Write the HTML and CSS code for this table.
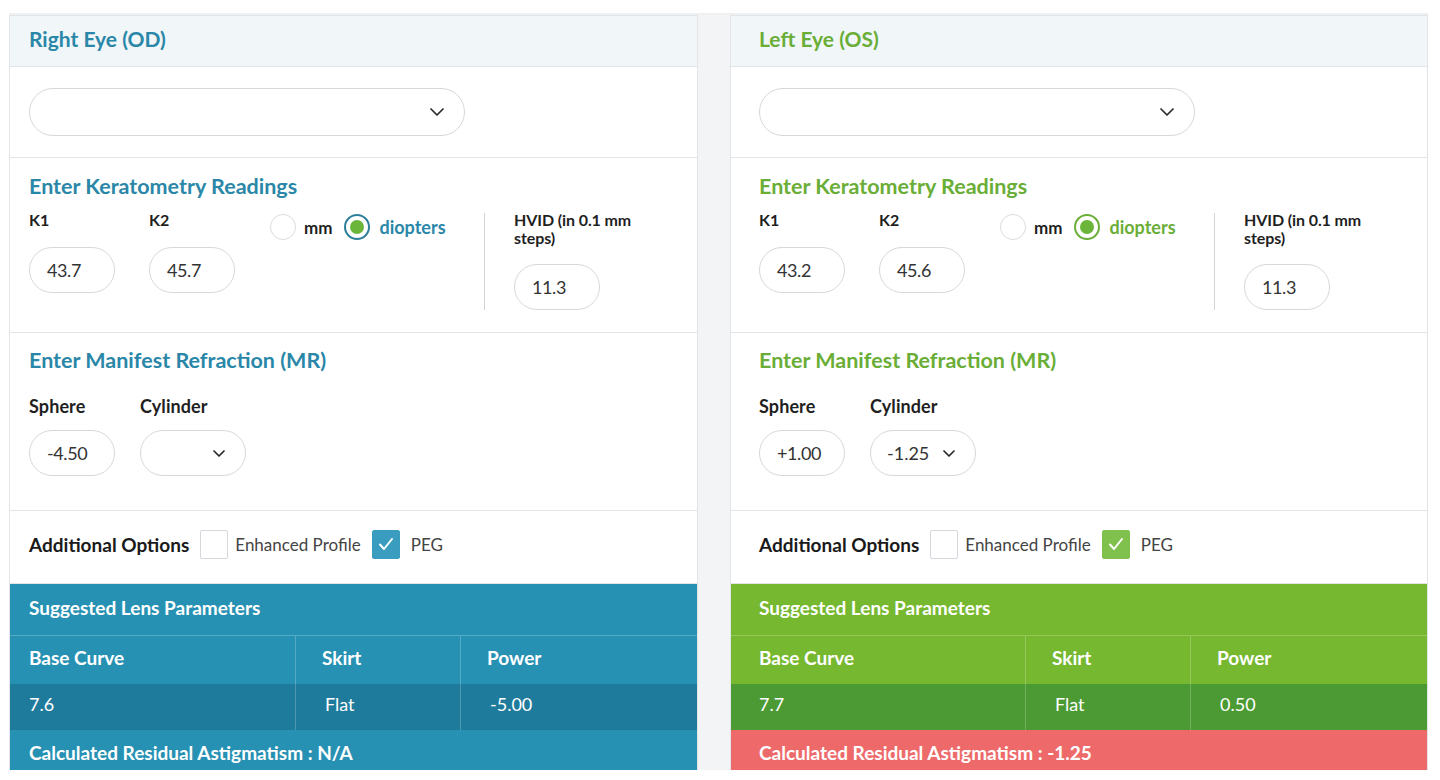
FILE: index.html
```html
<!DOCTYPE html>
<html lang="en">
<head>
<meta charset="utf-8">
<title>Lens Calculator</title>
<link rel="stylesheet" href="styles.css">
</head>
<body>
<div class="board">
  <section class="panel panel--od">
    <header class="panel-head"><h2 class="panel-title">Right Eye (OD)</h2></header>
    <div class="sec sec-select">
      <div class="select select--wide">
        <span class="select-value"></span>
        <svg class="chev" viewBox="0 0 14 8" width="14" height="8"><polyline points="1,1 7,7 13,1"/></svg>
      </div>
    </div>
    <div class="sec sec-kera">
      <h3 class="sec-title">Enter Keratometry Readings</h3>
      <div class="kera-row">
        <div class="field field--k"><div class="label">K1</div><div class="pill">43.7</div></div>
        <div class="field field--k"><div class="label">K2</div><div class="pill">45.7</div></div>
        <div class="units">
          <span class="radio"></span><span class="unit">mm</span>
          <span class="radio radio--on"><span class="radio-dot"></span></span><span class="unit unit--on">diopters</span>
        </div>
        <div class="vrule"></div>
        <div class="field field--hvid"><div class="label label--wrap">HVID (in 0.1 mm steps)</div><div class="pill">11.3</div></div>
      </div>
    </div>
    <div class="sec sec-mr">
      <h3 class="sec-title">Enter Manifest Refraction (MR)</h3>
      <div class="mr-row">
        <div class="field field--sphere"><div class="label label--mr">Sphere</div><div class="pill">-4.50</div></div>
        <div class="field field--cyl"><div class="label label--mr">Cylinder</div>
          <div class="select select--cyl"><span class="select-value"></span><svg class="chev chev--sm" viewBox="0 0 12 7" width="12" height="7"><polyline points="1,1 6,6 11,1"/></svg></div>
        </div>
      </div>
    </div>
    <div class="sec sec-opts">
      <span class="opts-label">Additional Options</span>
      <span class="check"></span><span class="opt">Enhanced Profile</span>
      <span class="check check--on"><svg viewBox="0 0 16 14" width="16" height="14"><polyline points="2,7.5 6,12 14,2"/></svg></span><span class="opt">PEG</span>
    </div>
    <div class="lens-head">Suggested Lens Parameters</div>
    <div class="lens-table">
      <div class="cell cell--h cell--first">Base Curve</div>
      <div class="cell cell--h">Skirt</div>
      <div class="cell cell--h">Power</div>
      <div class="cell cell--d cell--first">7.6</div>
      <div class="cell cell--d">Flat</div>
      <div class="cell cell--d">-5.00</div>
    </div>
    <div class="residual">Calculated Residual Astigmatism : N/A</div>
  </section>

  <section class="panel panel--os">
    <header class="panel-head"><h2 class="panel-title">Left Eye (OS)</h2></header>
    <div class="sec sec-select">
      <div class="select select--wide">
        <span class="select-value"></span>
        <svg class="chev" viewBox="0 0 14 8" width="14" height="8"><polyline points="1,1 7,7 13,1"/></svg>
      </div>
    </div>
    <div class="sec sec-kera">
      <h3 class="sec-title">Enter Keratometry Readings</h3>
      <div class="kera-row">
        <div class="field field--k"><div class="label">K1</div><div class="pill">43.2</div></div>
        <div class="field field--k"><div class="label">K2</div><div class="pill">45.6</div></div>
        <div class="units">
          <span class="radio"></span><span class="unit">mm</span>
          <span class="radio radio--on"><span class="radio-dot"></span></span><span class="unit unit--on">diopters</span>
        </div>
        <div class="vrule"></div>
        <div class="field field--hvid"><div class="label label--wrap">HVID (in 0.1 mm steps)</div><div class="pill">11.3</div></div>
      </div>
    </div>
    <div class="sec sec-mr">
      <h3 class="sec-title">Enter Manifest Refraction (MR)</h3>
      <div class="mr-row">
        <div class="field field--sphere"><div class="label label--mr">Sphere</div><div class="pill">+1.00</div></div>
        <div class="field field--cyl"><div class="label label--mr">Cylinder</div>
          <div class="select select--cyl"><span class="select-value">-1.25</span><svg class="chev chev--sm" viewBox="0 0 12 7" width="12" height="7"><polyline points="1,1 6,6 11,1"/></svg></div>
        </div>
      </div>
    </div>
    <div class="sec sec-opts">
      <span class="opts-label">Additional Options</span>
      <span class="check"></span><span class="opt">Enhanced Profile</span>
      <span class="check check--on"><svg viewBox="0 0 16 14" width="16" height="14"><polyline points="2,7.5 6,12 14,2"/></svg></span><span class="opt">PEG</span>
    </div>
    <div class="lens-head">Suggested Lens Parameters</div>
    <div class="lens-table">
      <div class="cell cell--h cell--first">Base Curve</div>
      <div class="cell cell--h">Skirt</div>
      <div class="cell cell--h">Power</div>
      <div class="cell cell--d cell--first">7.7</div>
      <div class="cell cell--d">Flat</div>
      <div class="cell cell--d">0.50</div>
    </div>
    <div class="residual residual--warn">Calculated Residual Astigmatism : -1.25</div>
  </section>
</div>
</body>
</html>
```

FILE: styles.css
```css
* { box-sizing: border-box; }

html, body {
  margin: 0;
  padding: 0;
  background: #ffffff;
  font-family: Lato, "Open Sans", "Liberation Sans", sans-serif;
  color: #1f1f1f;
}

.board {
  display: grid;
  grid-template-columns: 689px 698px;
  column-gap: 32px;
  margin: 13px 0 0 9px;
  width: 1419px;
  background: #f3f4f6;
  border-top: 2px solid #eef0f2;
}

.panel {
  --pad: 19px;
  --accent: #2a87a8;
  --bar: #2791b3;
  --bar-dark: #1f7b9b;
  --rule: rgba(255, 255, 255, 0.22);
  --check: #3a9dc0;
  --radio-ring: #2d7f99;
  background: #ffffff;
  border: 1px solid #e2e5e8;
  border-bottom: none;
  display: flex;
  flex-direction: column;
}

.panel--os {
  --pad: 28px;
  --accent: #6aae37;
  --bar: #76b82f;
  --bar-dark: #4b9a34;
  --check: #7fc14c;
  --radio-ring: #6aae37;
}

.panel-head {
  height: 51px;
  background: #f1f6f9;
  border-bottom: 1px solid #e2e5e8;
  padding-left: var(--pad);
  padding-bottom: 5px;
  display: flex;
  align-items: center;
}

.panel-title {
  margin: 0;
  font-size: 21px;
  font-weight: 700;
  color: var(--accent);
}

.sec {
  padding-left: var(--pad);
  padding-right: var(--pad);
  border-bottom: 1px solid #e2e5e8;
}

.sec-select {
  padding-top: 21px;
  padding-bottom: 21px;
}

.select {
  display: flex;
  align-items: center;
  justify-content: space-between;
  border: 1px solid #d5d8dc;
  background: #ffffff;
}

.select--wide {
  width: 436px;
  height: 48px;
  border-radius: 24px;
  padding: 0 20px 0 18px;
}

.select--cyl {
  width: 106px;
  height: 46px;
  border-radius: 23px;
  padding: 0 20px 0 16px;
  font-size: 18px;
  color: #333333;
}

.chev polyline,
.check svg polyline {
  fill: none;
  stroke-linecap: round;
  stroke-linejoin: round;
}

.chev polyline {
  stroke: #2b2b2b;
  stroke-width: 1.7;
}

.sec-kera {
  padding-top: 17px;
  padding-bottom: 22px;
}

.sec-title {
  margin: 0;
  height: 24px;
  line-height: 22px;
  font-size: 21.5px;
  font-weight: 700;
  color: var(--accent);
}

.kera-row {
  display: flex;
  align-items: flex-start;
  margin-top: 11px;
}

.field {
  display: flex;
  flex-direction: column;
}

.label {
  font-size: 16px;
  font-weight: 700;
  line-height: 20px;
  height: 20px;
  color: #1f1f1f;
  margin-bottom: 17px;
}

.label--wrap {
  width: 128px;
  height: 36px;
  line-height: 18px;
  margin-top: 1px;
  margin-bottom: 17px;
  letter-spacing: -0.1px;
}

.pill {
  width: 86px;
  height: 46px;
  border: 1px solid #d5d8dc;
  border-radius: 23px;
  padding-left: 17px;
  display: flex;
  align-items: center;
  font-size: 18px;
  color: #333333;
  letter-spacing: -0.4px;
}

.field--k { margin-right: 34px; }
.field--k + .field--k { margin-right: 35px; }

.units {
  display: flex;
  align-items: center;
  margin-top: 4px;
  width: 180px;
  margin-right: 34px;
}

.radio {
  width: 26px;
  height: 26px;
  border-radius: 50%;
  border: 1px solid #d9dcdf;
  display: flex;
  align-items: center;
  justify-content: center;
  flex: none;
}

.radio--on {
  border: 2px solid var(--radio-ring);
  margin-left: 12px;
}

.radio-dot {
  width: 14px;
  height: 14px;
  border-radius: 50%;
  background: #6bb63a;
}

.unit {
  font-size: 17px;
  font-weight: 700;
  color: #1f1f1f;
  margin-left: 8px;
}

.unit--on {
  color: var(--accent);
  font-size: 18px;
  margin-left: 9px;
}

.vrule {
  width: 1px;
  height: 97px;
  margin-top: 3px;
  background: #d3d6d9;
  margin-right: 29px;
}

.sec-mr {
  padding-top: 16px;
  padding-bottom: 34px;
}

.mr-row {
  display: flex;
  margin-top: 23px;
}

.label--mr {
  font-size: 18px;
  letter-spacing: 0.1px;
  margin-bottom: 14px;
}

.field--sphere { margin-right: 25px; }

.sec-opts {
  height: 73px;
  display: flex;
  align-items: center;
  padding-top: 0;
  padding-bottom: 6px;
}

.opts-label {
  font-size: 19px;
  font-weight: 700;
  color: #1a1a1a;
  margin-right: 11px;
}

.check {
  width: 28px;
  height: 29px;
  border: 1px solid #d5d8dc;
  border-radius: 2px;
  display: flex;
  align-items: center;
  justify-content: center;
  flex: none;
  margin-right: 7px;
}

.check--on {
  background: var(--check);
  border-color: var(--check);
  margin-right: 11px;
}

.check svg polyline {
  stroke: #ffffff;
  stroke-width: 2;
}

.opt {
  font-size: 17px;
  color: #444444;
  margin-right: 11px;
}

.lens-head {
  height: 52px;
  background: var(--bar);
  border-bottom: 1px solid var(--rule);
  padding-left: var(--pad);
  padding-bottom: 5px;
  display: flex;
  align-items: center;
  color: #ffffff;
  font-size: 19px;
  font-weight: 700;
}

.lens-table {
  display: grid;
  grid-template-columns: calc(var(--pad) + 266px) 165px 1fr;
  grid-template-rows: 48px 46px;
}

.cell {
  display: flex;
  align-items: center;
  color: #ffffff;
  font-size: 18px;
  border-left: 1px solid var(--rule);
  padding-left: 26px;
}

.cell--h {
  background: var(--bar);
  font-size: 19px;
  font-weight: 700;
  padding-bottom: 6px;
}

.cell--d {
  background: var(--bar-dark);
  padding-left: 29px;
  padding-bottom: 7px;
}

.cell--first {
  border-left: none;
  padding-left: var(--pad);
}

.residual {
  height: 40px;
  background: var(--bar);
  padding-left: var(--pad);
  padding-top: 4px;
  display: flex;
  align-items: center;
  color: #ffffff;
  font-size: 19px;
  font-weight: 700;
}

.residual--warn {
  background: #ee6a6a;
}
```
